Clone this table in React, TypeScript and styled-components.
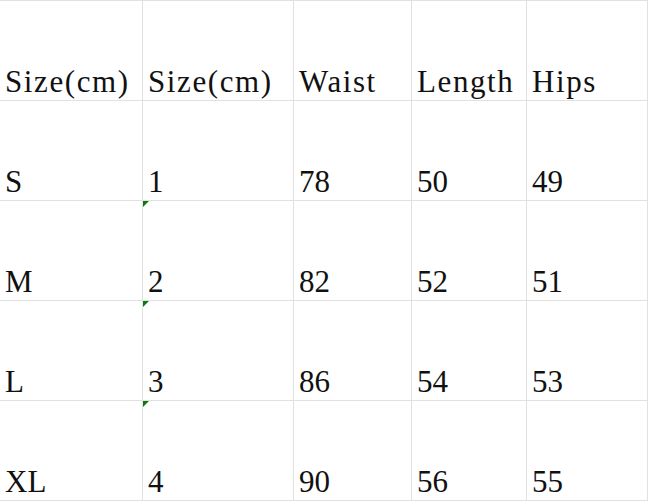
import React from 'react';
import styled, { createGlobalStyle } from 'styled-components';

const GlobalStyle = createGlobalStyle`
  html, body {
    margin: 0;
    padding: 0;
    background: #ffffff;
  }
`;

const Sheet = styled.div`
  display: grid;
  grid-template-columns: 143px 151px 118px 115px 121px;
  grid-auto-rows: 100px;
  width: 648px;
  border-top: 1px solid #e1e1e1;
  background: #ffffff;
`;

const Cell = styled.div<{ $header?: boolean }>`
  position: relative;
  display: flex;
  align-items: flex-end;
  box-sizing: border-box;
  padding: 0 0 3px 5px;
  border-right: 1px solid #e1e1e1;
  border-bottom: 1px solid #e1e1e1;
  color: #111111;
  white-space: nowrap;
  line-height: 1;
  font-family: "Liberation Serif", serif;
  font-size: 31px;
  letter-spacing: ${(p) => (p.$header ? '1.6px' : '0')};
`;

const TextFlag = styled.span`
  position: absolute;
  top: 0;
  left: 0;
  width: 0;
  height: 0;
  border-top: 6px solid #0e7a0e;
  border-right: 6px solid transparent;
`;

const headers = ['Size(cm)', 'Size(cm)', 'Waist', 'Length', 'Hips'];

const rows = [
  ['S', '1', '78', '50', '49'],
  ['M', '2', '82', '52', '51'],
  ['L', '3', '86', '54', '53'],
  ['XL', '4', '90', '56', '55'],
];

export default function App() {
  return (
    <>
      <GlobalStyle />
      <Sheet>
        {headers.map((h, i) => (
          <Cell key={'h' + i} $header>
            {h}
          </Cell>
        ))}
        {rows.map((row, r) =>
          row.map((v, c) => (
            <Cell key={r + '-' + c}>
              {c === 1 && r > 0 && <TextFlag />}
              {v}
            </Cell>
          ))
        )}
      </Sheet>
    </>
  );
}
